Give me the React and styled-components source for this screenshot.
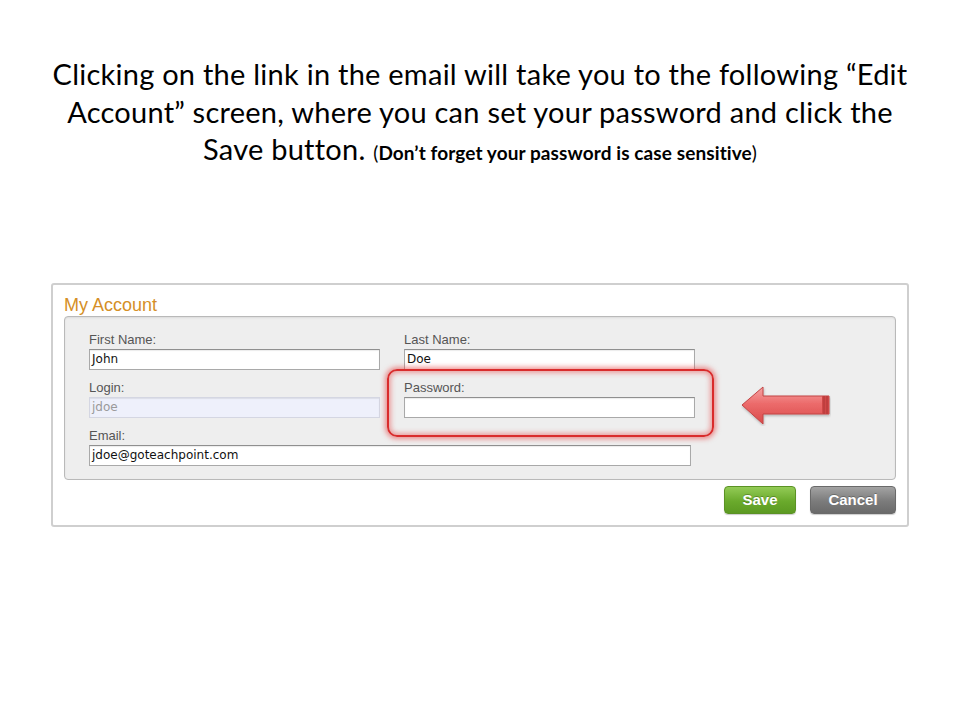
import React from "react";
import styled, { createGlobalStyle } from "styled-components";

const Global = createGlobalStyle`
  html, body { margin: 0; padding: 0; background: #ffffff; }
  body { width: 960px; height: 720px; overflow: hidden; }
`;

const Page = styled.div`
  width: 960px;
  height: 720px;
  background: #fff;
  padding-top: 55px;
  box-sizing: border-box;
`;

const Title = styled.div`
  font-family: "Lato", "Open Sans", sans-serif;
  font-size: 29px;
  letter-spacing: 0.25px;
  color: #000;
  text-align: center;
`;

const Line = styled.div`
  display: block;
  height: 37.5px;
  line-height: 37.5px;
  white-space: nowrap;
`;

const Note = styled.span`
  font-size: 19px;
  letter-spacing: 0.1px;
`;

const Bold = styled.span`
  font-weight: 700;
`;

const Card = styled.div`
  margin: 115px 0 0 51px;
  width: 858px;
  box-sizing: border-box;
  border: 2px solid #cfcfcf;
  border-radius: 3px;
  padding: 9px 11px 11px 11px;
  background: #fff;
`;

const CardTitle = styled.div`
  font-family: "Liberation Sans", Arial, sans-serif;
  font-size: 18px;
  line-height: 22px;
  color: #d58f27;
`;

const Panel = styled.div`
  position: relative;
  background: #eeeeee;
  border: 1px solid #b9b9b9;
  border-radius: 4px;
  box-shadow: inset 0 1px 2px rgba(0, 0, 0, 0.08);
  padding: 15px 24px 15px 24px;
  height: 164px;
  box-sizing: border-box;
`;

const Grid = styled.div`
  display: grid;
  grid-template-columns: 291px 291px;
  column-gap: 24px;
  row-gap: 10px;
`;

const Field = styled.div`
  display: flex;
  flex-direction: column;
  grid-column: ${(p) => (p.$wide ? "1 / span 2" : "auto")};
`;

const Label = styled.label`
  font-family: "Liberation Sans", Arial, sans-serif;
  font-size: 13px;
  line-height: 16px;
  color: #555;
  margin-bottom: 1px;
`;

const Input = styled.div`
  box-sizing: border-box;
  width: ${(p) => p.$w || 291}px;
  height: 21px;
  border: 1px solid #a9a9a9;
  border-top-color: #8f8f8f;
  background: ${(p) => (p.$disabled ? "#eef0fb" : "#ffffff")};
  box-shadow: inset 0 1px 1px rgba(0, 0, 0, 0.08);
  font-family: "DejaVu Sans", Verdana, sans-serif;
  font-size: 12px;
  line-height: 19px;
  padding-left: 2px;
  color: ${(p) => (p.$disabled ? "#9a9a9a" : "#111")};
  ${(p) => (p.$disabled ? "border-color: #d4d6e2;" : "")}
`;

const Highlight = styled.div`
  position: absolute;
  left: 322px;
  top: 52px;
  width: 327px;
  height: 68px;
  box-sizing: border-box;
  border: 2px solid #d92c2c;
  border-radius: 10px;
  box-shadow: 0 0 5px 2px rgba(230, 60, 60, 0.55), inset 0 0 5px 2px rgba(230, 60, 60, 0.45);
  pointer-events: none;
`;

const ArrowWrap = styled.div`
  position: absolute;
  left: 676px;
  top: 69px;
  width: 90px;
  height: 40px;
`;

const Buttons = styled.div`
  display: flex;
  justify-content: flex-end;
  gap: 14px;
  margin-top: 6px;
`;

const Button = styled.div`
  box-sizing: border-box;
  width: ${(p) => p.$w}px;
  height: 28px;
  border-radius: 4px;
  display: flex;
  align-items: center;
  justify-content: center;
  font-family: "Liberation Sans", Arial, sans-serif;
  font-weight: 700;
  font-size: 15px;
  color: #fff;
  text-shadow: 0 -1px 0 rgba(0, 0, 0, 0.25);
  background: ${(p) =>
    p.$variant === "save"
      ? "linear-gradient(#93cb56, #6aaa2c 55%, #5c9a22)"
      : "linear-gradient(#a3a3a3, #7b7b7b 55%, #6a6a6a)"};
  border: 1px solid ${(p) => (p.$variant === "save" ? "#5b9224" : "#6a6a6a")};
  box-shadow: 0 1px 1px rgba(0, 0, 0, 0.2);
`;

function Arrow() {
  return (
    <svg width="90" height="40" viewBox="0 0 90 40">
      <defs>
        <linearGradient id="ag" x1="0" y1="0" x2="0" y2="1">
          <stop offset="0" stopColor="#f6a3a3" />
          <stop offset="0.45" stopColor="#ec6b6b" />
          <stop offset="1" stopColor="#d94a4a" />
        </linearGradient>
        <filter id="sh" x="-10%" y="-10%" width="130%" height="140%">
          <feDropShadow dx="0.5" dy="1.5" stdDeviation="1" floodColor="#000" floodOpacity="0.25" />
        </filter>
      </defs>
      <path
        d="M1 19 L22 1 L22 10 L88 10 L88 28 L22 28 L22 38 Z"
        fill="url(#ag)"
        stroke="#c24545"
        strokeWidth="1"
        filter="url(#sh)"
      />
      <rect x="81" y="10" width="7" height="18" fill="#cf4848" />
      <line x1="83" y1="10" x2="83" y2="28" stroke="#a83232" strokeWidth="0.8" />
      <line x1="86" y1="10" x2="86" y2="28" stroke="#a83232" strokeWidth="0.8" />
    </svg>
  );
}

export default function App() {
  return (
    <Page>
      <Global />
      <Title>
        <Line>Clicking on the link in the email will take you to the following “Edit</Line>
        <Line>Account” screen, where you can set your password and click the</Line>
        <Line>
          Save button. <Note>(<Bold>Don’t forget your password is case sensitive</Bold>)</Note>
        </Line>
      </Title>
      <Card>
        <CardTitle>My Account</CardTitle>
        <Panel>
          <Grid>
            <Field>
              <Label>First Name:</Label>
              <Input>John</Input>
            </Field>
            <Field>
              <Label>Last Name:</Label>
              <Input>Doe</Input>
            </Field>
            <Field>
              <Label>Login:</Label>
              <Input $disabled>jdoe</Input>
            </Field>
            <Field>
              <Label>Password:</Label>
              <Input />
            </Field>
            <Field $wide>
              <Label>Email:</Label>
              <Input $w={602}>jdoe@goteachpoint.com</Input>
            </Field>
          </Grid>
          <Highlight />
          <ArrowWrap>
            <Arrow />
          </ArrowWrap>
        </Panel>
        <Buttons>
          <Button $variant="save" $w={72}>Save</Button>
          <Button $variant="cancel" $w={86}>Cancel</Button>
        </Buttons>
      </Card>
    </Page>
  );
}
